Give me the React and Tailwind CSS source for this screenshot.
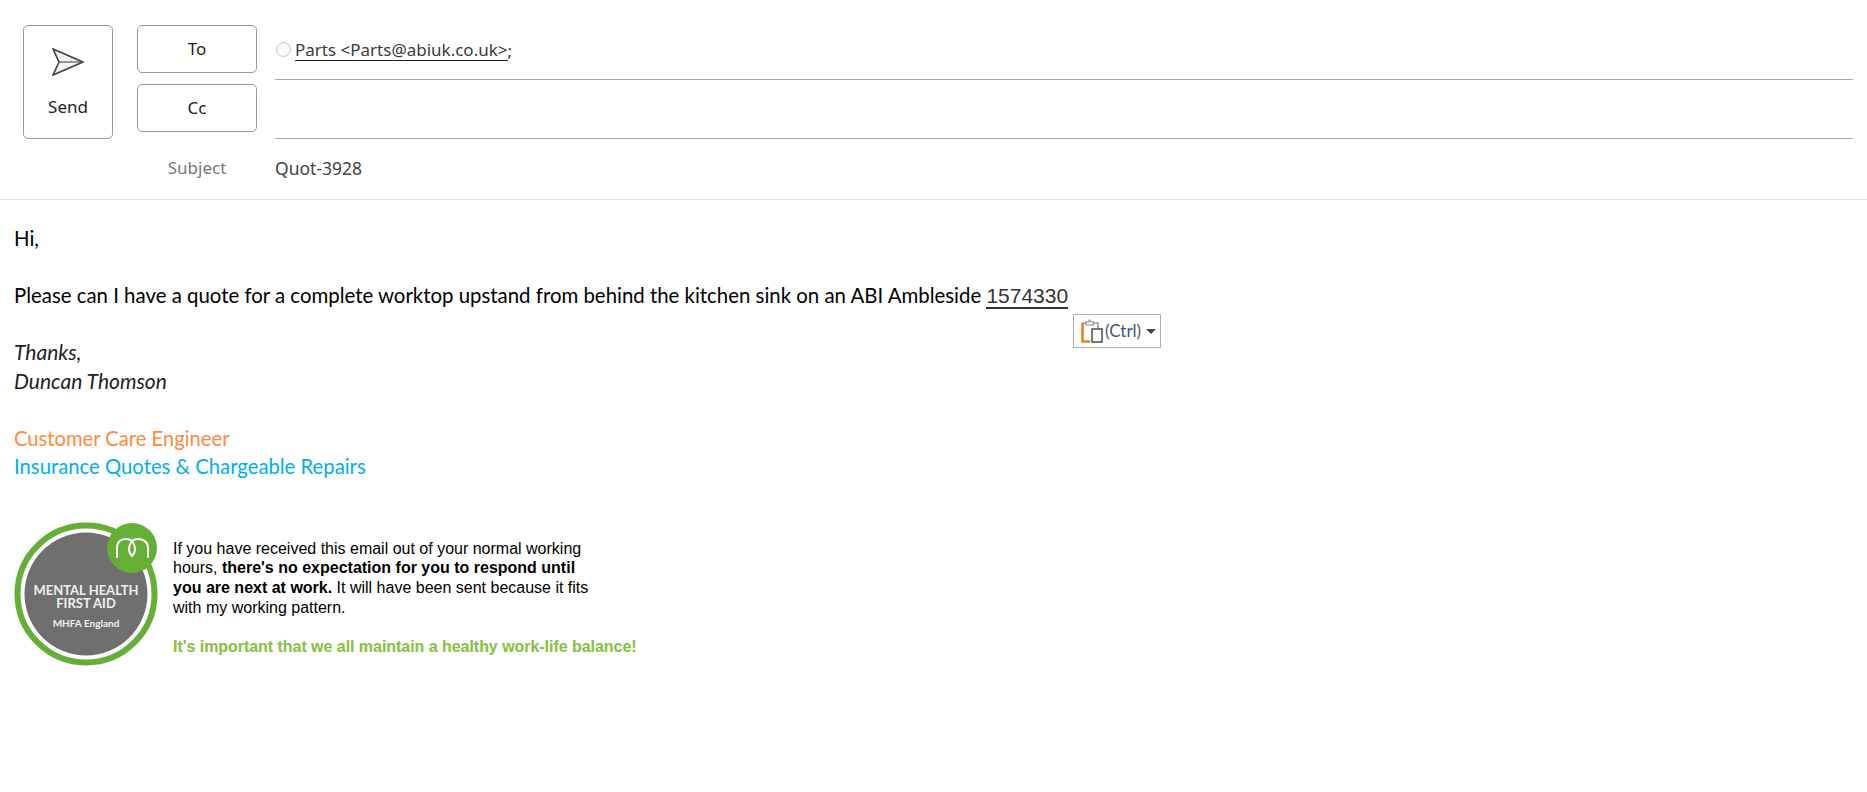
import React from 'react';

const SendIcon = () => (
  <svg width="32" height="28" viewBox="0 0 32 28" fill="none">
    <path d="M1 1L31 14L1 27L7 14Z" fill="#f3f3f3" stroke="#444" strokeWidth="1.7" />
    <path d="M7 14H31" stroke="#555" strokeWidth="1.2" />
  </svg>
);

const PasteIcon = () => (
  <svg width="23" height="24" viewBox="0 0 23 24" fill="none">
    <path d="M1.5 4H16V8H8V22H1.5Z" fill="#fff" />
    <path d="M1.5 4V22.5H9" stroke="#e8821e" strokeWidth="2.6" />
    <path d="M1 4H5M13 4H17V9" stroke="#9a9a9a" strokeWidth="1.6" />
    <path d="M5 6V3H7.5L8.5 1L10 3H12.5V6Z" fill="#fff" stroke="#8a8a8a" strokeWidth="1.2" />
    <rect x="11" y="10" width="10" height="13" fill="#fff" stroke="#555" strokeWidth="1.6" />
  </svg>
);

const Badge = () => (
  <svg width="144" height="144" viewBox="0 0 144 144" className="shrink-0">
    <circle cx="72" cy="72" r="68.5" fill="#fff" stroke="#65af37" strokeWidth="6" />
    <circle cx="72" cy="72" r="61.5" fill="#6f6f6f" />
    <circle cx="118" cy="26" r="25" fill="#65af37" />
    <path d="M103 35V26C103 19 108 17 112 17C115 17 117 18 118 19C122 24 122 30 118 34C114 30 114 24 118 19C119 18 121 17 124 17C128 17 134 19 134 26V35" fill="none" stroke="#fff" strokeWidth="2" strokeLinecap="round" />
    <g fill="#f0f0f0" fontFamily="Lato, sans-serif" textAnchor="middle">
      <text x="72" y="73" fontSize="13" fontWeight="700">MENTAL HEALTH</text>
      <text x="72" y="86" fontSize="13" fontWeight="700">FIRST AID</text>
      <text x="72" y="105" fontSize="10" fontWeight="700">MHFA England</text>
    </g>
  </svg>
);

const HeaderButton = ({ children }) => (
  <button className="w-[120px] h-[48px] shrink-0 bg-white border border-[#999] rounded-[5px] text-[#222] text-[17px]">
    {children}
  </button>
);

const App = () => {
  return (
    <div className="w-[1867px] h-[792px] bg-white overflow-hidden relative font-['Noto_Sans','Open_Sans',sans-serif]">
      <div className="h-[200px] border-b border-[#e1e1e1] flex pt-[25px] pl-[23px] pr-[14px]">
        <button className="w-[90px] h-[114px] shrink-0 border border-[#999] rounded-[5px] flex flex-col items-center pt-[22px] text-[17px] text-[#222]">
          <SendIcon />
          <span className="mt-[20px] leading-[22px]">Send</span>
        </button>

        <div className="flex-1 ml-[24px]">
          <div className="flex">
            <HeaderButton>To</HeaderButton>
            <div className="flex-1 ml-[18px] h-[55px] border-b border-[#a9a9a9] flex items-start pt-[15px] text-[17px] text-[#3a3a3a] leading-[22px]">
              <span className="w-[15px] h-[15px] ml-[1px] mt-[2px] mr-[4px] rounded-full border border-[#b5cbd8] bg-[#f7f9fa]" />
              <span className="border-b border-[#222] leading-[20px]">Parts &lt;Parts@abiuk.co.uk&gt;</span>
              <span>;</span>
            </div>
          </div>
          <div className="flex mt-[4px]">
            <HeaderButton>Cc</HeaderButton>
            <div className="flex-1 ml-[18px] h-[55px] border-b border-[#a9a9a9]" />
          </div>
          <div className="flex mt-[17px] text-[17px] leading-[24px]">
            <span className="w-[120px] text-center text-[#777]">Subject</span>
            <span className="ml-[18px] text-[17.5px] text-[#444]">Quot-3928</span>
          </div>
        </div>
      </div>

      <div className="relative pl-[14px] pt-[24px] font-['Lato',sans-serif] text-[20.4px] leading-[28.5px] text-black">
        <p>Hi,</p>
        <p>&nbsp;</p>
        <p>
          Please can I have a quote for a complete worktop upstand from behind the kitchen sink on an ABI Ambleside{' '}
          <span className="border-b-2 border-[#333] text-[#333] font-['Liberation_Sans',sans-serif] text-[21px] leading-[23px] inline-block">1574330</span>
        </p>
        <p>&nbsp;</p>
        <p className="italic text-[#222] text-[21px]">Thanks,</p>
        <p className="italic text-[#222] text-[21px]">Duncan Thomson</p>
        <p>&nbsp;</p>
        <p className="text-[#ff8a3c] text-[20.2px]">Customer Care Engineer</p>
        <p className="text-[#00aeef] text-[20.3px]">Insurance Quotes &amp; Chargeable Repairs</p>

        <div className="flex mt-[41px]">
          <Badge />
          <div className="ml-[15px] pt-[17px] font-['Liberation_Sans',sans-serif] text-[16px] leading-[19.7px]">
            <p>If you have received this email out of your normal working</p>
            <p>hours, <b>there's no expectation for you to respond until</b></p>
            <p><b>you are next at work.</b> It will have been sent because it fits</p>
            <p>with my working pattern.</p>
            <p>&nbsp;</p>
            <p className="font-bold text-[#84c13d] tracking-[-0.04px]">It's important that we all maintain a healthy work-life balance!</p>
          </div>
        </div>
      </div>

      <div className="absolute left-[1073px] top-[314px] w-[88px] h-[34px] bg-white border border-[#b0b0b0] flex items-center pl-[7px] text-[17px] text-[#3c5a78]">
        <PasteIcon />
        <span className="ml-[1px] font-['Lato',sans-serif]">(Ctrl)</span>
        <span className="ml-[5px] w-0 h-0 border-x-[5px] border-x-transparent border-t-[5px] border-t-[#444]" />
      </div>
    </div>
  );
};

export default App;
